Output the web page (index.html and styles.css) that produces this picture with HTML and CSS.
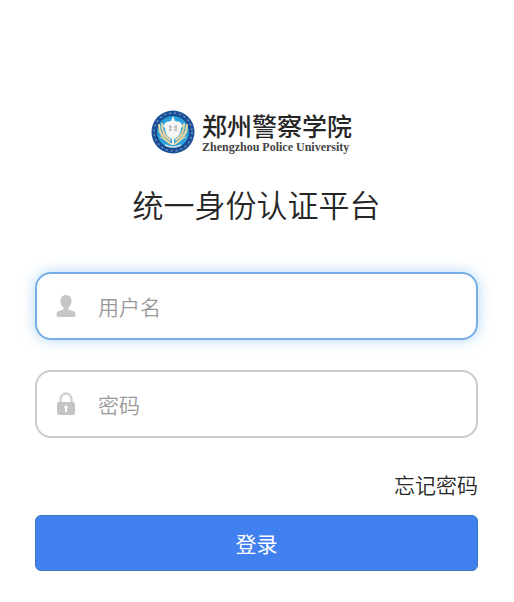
FILE: index.html
```html
<!doctype html>
<html lang="zh-CN">
<head>
  <meta charset="utf-8">
  <meta name="viewport" content="width=device-width,initial-scale=1">
  <title>统一身份认证平台</title>
  <link rel="stylesheet" href="styles.css">
</head>
<body>
  <main class="container">
    <div class="logo">
      <svg class="badge" viewBox="0 0 44 44" aria-hidden="true">
        <circle cx="22" cy="22" r="21.5" fill="#1c4f97"/>
        <circle cx="22" cy="22" r="19" fill="none" stroke="#6b93c0" stroke-width="1.500" stroke-dasharray="2 3"/>
        <circle cx="22" cy="22" r="16.5" fill="#2ba0da" stroke="#12407f"/>
        <!-- 麦穗 -->
        <g fill="none" stroke="#f0d49c" stroke-width="2" stroke-linecap="round">
          <path d="M8 15c0 8 4 14 12 19M36 15c0 8-4 14-12 19"/>
          <path d="M11 14c0 7 2 12 8 16M33 14c0 7-2 12-8 16"/>
          <path d="M8 22l5 4M9 27l6 3M36 22l-5 4M35 27l-6 3" stroke-width="1"/>
        </g>
        <!-- 盾牌 -->
        <path d="M22 6l2 5 5 1 3 4-2 2c0 6-3 9-8 12-5-3-8-6-8-12l-2-2 3-4 5-1z" fill="#f4f7f6"/>
        <path d="M18 17h3M23 17h3M18 20h3M23 20h3M19 15v6M25 15v6" stroke="#b7a9a5" fill="none"/>
        <path d="M21 29h2v6h-2z" fill="#f4f7f6"/>
        <path d="M14 35q8 4 16 0" fill="none" stroke="#d9e6ee" stroke-width="1.5"/>
      </svg>
      <div class="school">
        <div class="school-cn">郑州警察学院</div>
        <div class="school-en">Zhengzhou Police University</div>
      </div>
    </div>

    <h1>统一身份认证平台</h1>

    <form>
      <div class="field active">
        <label for="username" aria-label="用户名">
          <svg class="icon" viewBox="0 0 20 24">
            <path d="M10 1c3.400 0 5.500 2.300 5.500 6 0 3-1.200 5.200-3 6.500v2l5 1.800c1.500.6 2 1.800 2 3.700 0 1.300-.8 2-2 2h-15c-1.200 0-2-.7-2-2 0-1.900.5-3.100 2-3.700l5-1.800v-2c-1.800-1.300-3-3.500-3-6.500 0-3.700 2.100-6 5.500-6z" fill="#c6c6c6"/>
          </svg>
        </label>
        <input id="username" type="text" placeholder="用户名">
      </div>
      <div class="field">
        <label for="password" aria-label="密码">
          <svg class="icon" viewBox="0 0 20 24">
            <path d="M4.500 12V7.500a5.500 6 0 0 1 11 0V12" fill="none" stroke="#d2d2d2" stroke-width="2.500"/>
            <rect x="1" y="10" width="18" height="13" rx="2" fill="#c4c4c4"/>
            <path d="M10 13.500a1.800 1.800 0 0 1 1 3.300V20H9v-3.200a1.800 1.800 0 0 1 1-3.300z" fill="#fff"/>
          </svg>
        </label>
        <input id="password" type="password" placeholder="密码">
      </div>
      <div class="row"><a href="#">忘记密码</a></div>
      <button type="submit">登录</button>
    </form>
  </main>
</body>
</html>
```

FILE: styles.css
```css
*{box-sizing:border-box}
body{margin:0;background:#fff;color:#262626;font-family:"Noto Sans CJK SC",sans-serif}
.container{padding:110px 36px 24px 35px}
.logo{display:flex;justify-content:center;gap:7px;padding-right:10px}
.badge{width:44px;height:44px}
.school{padding-top:4px}
.school-cn{height:26px;font-size:25px;font-weight:500;line-height:22px}
.school-en{font:bold 12px/14px "Liberation Serif",serif;color:#444}
h1{margin:27px 0 45px;font-size:31px;font-weight:350;line-height:46px;text-align:center}
.field{display:flex;align-items:center;height:68px;margin-bottom:30px;padding:0 19px;border:2px solid #ccc;border-radius:16px;background:#fff}
.field.active{border-color:#75afe5;box-shadow:0 0 14px rgba(102,175,233,.5)}
.icon{display:block;width:20px;height:24px}
input{flex:1;min-width:0;height:60px;margin-left:22px;padding:0;border:0;outline:0;background:none;color:#333;font-family:inherit;font-size:21px;font-weight:350}
input::placeholder{color:#999;opacity:1}
.row{display:flex;justify-content:flex-end}
a{color:#262626;font-size:21px;font-weight:350;line-height:32px;text-decoration:none}
button{display:block;width:100%;height:56px;margin-top:15px;padding:0;border:1px solid #3b75bd;border-radius:6px;background:#4080ef;color:#fff;font-family:inherit;font-size:21px}
```
